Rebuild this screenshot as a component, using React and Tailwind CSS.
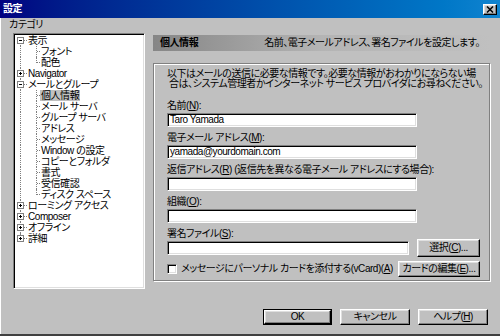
import React from "react";

const U = ({ c }) => <span className="underline underline-offset-[1px]">{c}</span>;

const sunken =
  "bg-white border border-t-[#808080] border-l-[#808080] border-r-white border-b-white shadow-[inset_1px_1px_0_#000,inset_-1px_-1px_0_#dfdfdf]";
const raised =
  "flex items-center justify-center bg-[#c0c0c0] border border-t-white border-l-white border-r-black border-b-black shadow-[inset_-1px_-1px_0_#808080,inset_1px_1px_0_#dfdfdf] text-[10px] leading-none whitespace-nowrap";

const tree = [
  { t: "表示", r: true, e: "-" },
  { t: "フォント" },
  { t: "配色", last: true },
  { t: "Navigator", r: true, e: "+" },
  { t: "メールとグループ", r: true, e: "-" },
  { t: "個人情報", sel: true },
  { t: "メール サーバ" },
  { t: "グループ サーバ" },
  { t: "アドレス" },
  { t: "メッセージ" },
  { t: "Window の設定" },
  { t: "コピーとフォルダ" },
  { t: "書式" },
  { t: "受信確認" },
  { t: "ディスク スペース", last: true },
  { t: "ローミング アクセス", r: true, e: "+" },
  { t: "Composer", r: true, e: "+" },
  { t: "オフライン", r: true, e: "+" },
  { t: "詳細", r: true, e: "+", lastRoot: true },
];

function TreeRow({ item, first }) {
  const rootLine = first
    ? "top-[5px] bottom-0"
    : item.lastRoot
    ? "top-0 h-[6px]"
    : "top-0 bottom-0";
  return (
    <div className={`relative h-[11px] leading-[11px] whitespace-nowrap ${item.r ? "pl-[13px]" : "pl-[26px]"}`}>
      <span className={`absolute left-[5px] w-0 border-l border-dotted border-[#808080] ${rootLine}`} />
      {item.r ? (
        <>
          <span className="absolute left-[8px] top-[5px] w-[4px] h-0 border-t border-dotted border-[#808080]" />
          <span className="absolute left-[2px] top-[2px] w-[7px] h-[7px] bg-white border border-[#808080] flex items-center justify-center">
            <span className="relative w-[3px] h-[1px] bg-black">
              {item.e === "+" && <span className="absolute left-[1px] top-[-1px] w-[1px] h-[3px] bg-black" />}
            </span>
          </span>
        </>
      ) : (
        <>
          <span className={`absolute left-[21px] w-0 border-l border-dotted border-[#808080] ${item.last ? "top-0 h-[6px]" : "top-0 bottom-0"}`} />
          <span className="absolute left-[22px] top-[5px] w-[3px] h-0 border-t border-dotted border-[#808080]" />
        </>
      )}
      <span className={item.sel ? "inline-block bg-[#c0c0c0] px-[1px] -ml-[1px] leading-[11px]" : ""}>{item.t}</span>
    </div>
  );
}

export default function App() {
  return (
    <div className="w-[500px] h-[336px] bg-[#c0c0c0] flex flex-col overflow-hidden text-black text-[10px] tracking-[-0.45px] font-['Liberation_Sans','Noto_Sans_CJK_JP',sans-serif] [font-feature-settings:'palt'] border-b-2 border-b-[#404040]">
      {/* title bar */}
      <div className="h-[18px] shrink-0 flex items-center justify-between pl-[3px] pr-[3px] bg-linear-to-r from-[#000080] to-[#1084d0]">
        <span className="text-white font-bold text-[10px] leading-none">設定</span>
        <div className={`${raised} w-[14px] h-[11px]`}>
          <svg width="8" height="7" viewBox="0 0 8 7">
            <path d="M1 0.5 L7 6.5 M7 0.5 L1 6.5" stroke="#000" strokeWidth="1.5" />
          </svg>
        </div>
      </div>

      <div className="flex flex-1 border-l border-l-white">
        {/* left column */}
        <div className="w-[144px] shrink-0 flex flex-col">
          <div className="h-[15px] pt-[1px] pl-[8px] leading-[12px]">カテゴリ</div>
          <div className={`${sunken} ml-[12px] w-[132px] h-[256px] pt-[1px] pl-[1px]`}>
            {tree.map((it, i) => (
              <TreeRow key={i} item={it} first={i === 0} />
            ))}
          </div>
        </div>

        {/* right column */}
        <div className="ml-[8px] w-[337px] shrink-0 flex flex-col pt-[17px]">
          <div className="h-[16px] flex items-center justify-between pl-[7px] pr-[10px] bg-linear-to-r from-[#868686] via-[#b4b4b4] to-[#c0c0c0]">
            <span className="font-bold leading-none">個人情報</span>
            <span className="leading-none whitespace-nowrap">名前、電子メールアドレス、署名ファイルを設定します。</span>
          </div>

          <div className="mt-[12px] h-[218px] border border-[#808080] shadow-[inset_1px_1px_0_#fff,1px_1px_0_#fff] pl-[13px] pt-[5px] flex flex-col">
            <div className="leading-[10px] whitespace-nowrap">
              以下はメールの送信に必要な情報です。必要な情報がおわかりにならない場
              <br />
              <span className="pl-[2px]">合は、システム管理者かインターネット サービス プロバイダにお尋ねください。</span>
            </div>

            <div className="mt-[10px] h-[13px] leading-[13px] whitespace-nowrap">
              名前(<U c="N" />):
            </div>
            <div className={`${sunken} mt-[1px] w-[250px] h-[14px] pl-[2px] leading-[12px] flex items-center`}>Taro Yamada</div>

            <div className="mt-[4px] h-[13px] leading-[13px] whitespace-nowrap">
              電子メール アドレス(<U c="M" />):
            </div>
            <div className={`${sunken} mt-[1px] w-[250px] h-[14px] pl-[2px] leading-[12px] flex items-center`}>yamada@yourdomain.com</div>

            <div className="mt-[4px] h-[13px] leading-[13px] whitespace-nowrap">
              返信アドレス(<U c="R" />) (返信先を異なる電子メール アドレスにする場合):
            </div>
            <div className={`${sunken} mt-[1px] w-[250px] h-[14px]`} />

            <div className="mt-[4px] h-[13px] leading-[13px] whitespace-nowrap">
              組織(<U c="O" />):
            </div>
            <div className={`${sunken} mt-[1px] w-[250px] h-[14px]`} />

            <div className="mt-[4px] h-[13px] leading-[13px] whitespace-nowrap">
              署名ファイル(<U c="S" />):
            </div>
            <div className="flex items-center mt-[-1px] h-[18px]">
              <div className={`${sunken} w-[242px] h-[14px] shrink-0`} />
              <div className={`${raised} ml-[8px] w-[63px] h-[18px] shrink-0`}>
                選択(<U c="C" />)...
              </div>
            </div>

            <div className="flex items-center mt-[4px] h-[16px]">
              <div className={`${sunken} w-[10px] h-[10px] shrink-0`} />
              <span className="ml-[4px] whitespace-nowrap leading-none">
                メッセージにパーソナル カードを添付する(vCard)(<U c="A" />)
              </span>
              <div className={`${raised} ml-auto mr-[9px] w-[82px] h-[16px] shrink-0`}>
                カードの編集(<U c="E" />)...
              </div>
            </div>
          </div>

          <div className="mt-[28px] flex justify-end gap-[8px] pr-[2px]">
            <div className="w-[69px] h-[16px] border border-black">
              <div className={`${raised} w-full h-full`}>OK</div>
            </div>
            <div className={`${raised} w-[70px] h-[16px]`}>キャンセル</div>
            <div className={`${raised} w-[70px] h-[16px]`}>
              ヘルプ(<U c="H" />)
            </div>
          </div>
        </div>
      </div>
    </div>
  );
}
